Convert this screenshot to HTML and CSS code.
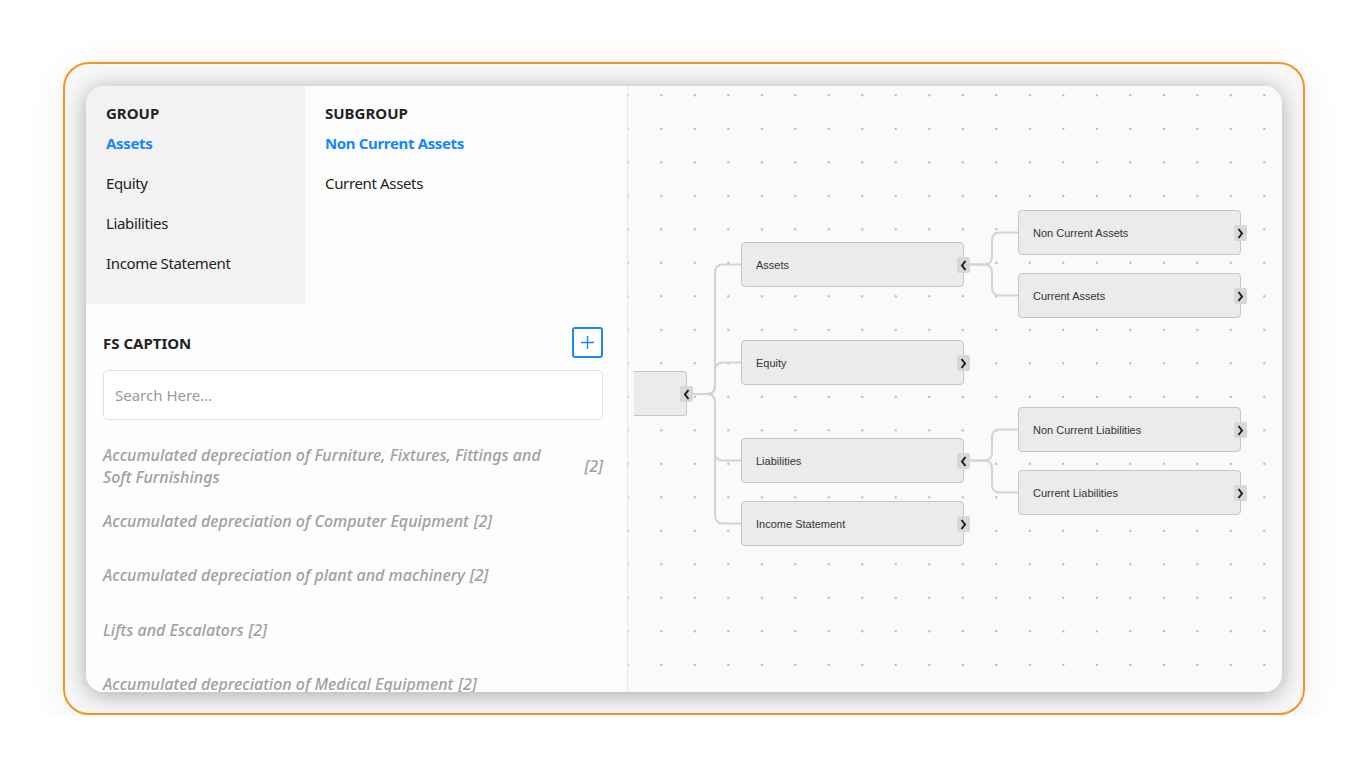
FILE: index.html
```html
<!DOCTYPE html>
<html lang="en">
<head>
  <meta charset="UTF-8">
  <meta name="viewport" content="width=device-width, initial-scale=1.0">
  <title>FS Mapping</title>
  <link rel="stylesheet" href="styles.css">
</head>
<body>

  <div class="frame">
    <div class="card">

      <div class="side">
        <div class="groups">
          <div class="col group-col">
            <h3>GROUP</h3>
            <ul class="pick-list">
              <li class="active">Assets</li>
              <li>Equity</li>
              <li>Liabilities</li>
              <li>Income Statement</li>
            </ul>
          </div>
          <div class="col sub-col">
            <h3>SUBGROUP</h3>
            <ul class="pick-list">
              <li class="active">Non Current Assets</li>
              <li>Current Assets</li>
            </ul>
          </div>
        </div>

        <div class="captions">
          <div class="caption-head">
            <h3>FS CAPTION</h3>
            <button class="add-btn" type="button">
              <svg width="15" height="15" viewBox="0 0 15 15"><path d="M7.5 1v13M1 7.5h13" stroke="#1a88f5" stroke-width="1.4" fill="none"/></svg>
            </button>
          </div>
          <input class="search" type="text" placeholder="Search Here...">
          <ul class="caption-list">
            <li><span>Accumulated depreciation of Furniture, Fixtures, Fittings and Soft&nbsp;Furnishings</span><span>[2]</span></li>
            <li><span>Accumulated depreciation of Computer Equipment</span><span>[2]</span></li>
            <li><span>Accumulated depreciation of plant and machinery</span><span>[2]</span></li>
            <li><span>Lifts and Escalators</span><span>[2]</span></li>
            <li><span>Accumulated depreciation of Medical Equipment</span><span>[2]</span></li>
          </ul>
        </div>
      </div>

      <div class="canvas">
        <svg class="links" width="654" height="606">
          <g stroke="#d3d3d3" stroke-width="2" fill="none">
            <path d="M65 308 H79 Q87 308 87 300 V186.5 Q87 178.5 95 178.5 H113"/>
            <path d="M65 308 H79 Q87 308 87 300 V284.5 Q87 276.5 95 276.5 H113"/>
            <path d="M65 308 H79 Q87 308 87 316 V366.5 Q87 374.5 95 374.5 H113"/>
            <path d="M65 308 H79 Q87 308 87 316 V429.5 Q87 437.5 95 437.5 H113"/>
            <path d="M342 178.5 H356 Q364 178.5 364 170.5 V154.5 Q364 146.5 372 146.5 H390"/>
            <path d="M342 178.5 H356 Q364 178.5 364 186.5 V201.5 Q364 209.5 372 209.5 H390"/>
            <path d="M342 374.5 H356 Q364 374.5 364 366.5 V351.5 Q364 343.5 372 343.5 H390"/>
            <path d="M342 374.5 H356 Q364 374.5 364 382.5 V398.5 Q364 406.5 372 406.5 H390"/>
          </g>
        </svg>

        <div class="node root" style="left: 6px; top: 285px;">
          <span class="tab"><svg width="7" height="11" viewBox="0 0 7 11"><path d="M5.5 1L2 5.5L5.5 10" stroke="#1e1e1e" stroke-width="2" fill="none"/></svg></span>
        </div>

        <div class="node" style="left: 113px; top: 156px;">Assets
          <span class="tab"><svg width="7" height="11" viewBox="0 0 7 11"><path d="M5.5 1L2 5.5L5.5 10" stroke="#1e1e1e" stroke-width="2" fill="none"/></svg></span>
        </div>
        <div class="node" style="left: 113px; top: 254px;">Equity
          <span class="tab"><svg width="7" height="11" viewBox="0 0 7 11"><path d="M1.5 1L5 5.5L1.5 10" stroke="#1e1e1e" stroke-width="2" fill="none"/></svg></span>
        </div>
        <div class="node" style="left: 113px; top: 352px;">Liabilities
          <span class="tab"><svg width="7" height="11" viewBox="0 0 7 11"><path d="M5.5 1L2 5.5L5.5 10" stroke="#1e1e1e" stroke-width="2" fill="none"/></svg></span>
        </div>
        <div class="node" style="left: 113px; top: 415px;">Income Statement
          <span class="tab"><svg width="7" height="11" viewBox="0 0 7 11"><path d="M1.5 1L5 5.5L1.5 10" stroke="#1e1e1e" stroke-width="2" fill="none"/></svg></span>
        </div>

        <div class="node" style="left: 390px; top: 124px;">Non Current Assets
          <span class="tab"><svg width="7" height="11" viewBox="0 0 7 11"><path d="M1.5 1L5 5.5L1.5 10" stroke="#1e1e1e" stroke-width="2" fill="none"/></svg></span>
        </div>
        <div class="node" style="left: 390px; top: 187px;">Current Assets
          <span class="tab"><svg width="7" height="11" viewBox="0 0 7 11"><path d="M1.5 1L5 5.5L1.5 10" stroke="#1e1e1e" stroke-width="2" fill="none"/></svg></span>
        </div>
        <div class="node" style="left: 390px; top: 321px;">Non Current Liabilities
          <span class="tab"><svg width="7" height="11" viewBox="0 0 7 11"><path d="M1.5 1L5 5.5L1.5 10" stroke="#1e1e1e" stroke-width="2" fill="none"/></svg></span>
        </div>
        <div class="node" style="left: 390px; top: 384px;">Current Liabilities
          <span class="tab"><svg width="7" height="11" viewBox="0 0 7 11"><path d="M1.5 1L5 5.5L1.5 10" stroke="#1e1e1e" stroke-width="2" fill="none"/></svg></span>
        </div>
      </div>

    </div>
  </div>

</body>
</html>
```

FILE: styles.css
```css
body {
    margin: 0;
    background-color: #ffffff;
    font-family: "Noto Sans", "Open Sans", sans-serif;
    color: #222;
}

.frame {
    width: 1196px;
    height: 606px;
    margin: 62px 0 0 63px;
    padding: 22px 21px 21px 21px;
    border: 2px solid #f39425;
    border-radius: 26px;
    background-color: #f7f7f7;
    box-shadow: 0 8px 40px rgba(0, 0, 0, 0.07);
}

.card {
    display: flex;
    height: 606px;
    border-radius: 18px;
    overflow: hidden;
    background-color: #fdfdfd;
    box-shadow: 0 3px 22px rgba(0, 0, 0, 0.32);
}

/* left side */
.side {
    width: 541px;
    flex-shrink: 0;
    border-right: 1px solid #e6e6e6;
    display: flex;
    flex-direction: column;
    overflow: hidden;
}

.groups {
    display: flex;
    height: 218px;
    flex-shrink: 0;
}

.col {
    padding: 17px 20px 0 20px;
}

.group-col {
    width: 179px;
    background-color: #f2f2f2;
}

.sub-col {
    flex: 1;
    background-color: #fcfcfc;
}

h3 {
    margin: 0;
    font-size: 15px;
    line-height: 20px;
    font-weight: 700;
    color: #222;
}

.pick-list {
    list-style-type: none;
    margin: 0;
    padding: 0;
}

.pick-list li {
    font-size: 15px;
    line-height: 40px;
    letter-spacing: -0.35px;
    color: #222;
}

.pick-list li.active {
    color: #1787f7;
    font-weight: 700;
}

.captions {
    padding: 23px 24px 0 17px;
    background-color: #fdfdfd;
}

.caption-head {
    display: flex;
    justify-content: space-between;
    align-items: center;
    height: 31px;
}

.add-btn {
    width: 31px;
    height: 31px;
    padding: 0;
    display: flex;
    align-items: center;
    justify-content: center;
    background-color: #ffffff;
    border: 2px solid #1a88f5;
    border-radius: 3px;
}

.search {
    display: block;
    box-sizing: border-box;
    width: 100%;
    height: 50px;
    margin-top: 12px;
    padding: 0 11px;
    border: 1px solid #e2e2e2;
    border-radius: 5px;
    background-color: #ffffff;
    font-family: "Noto Sans", sans-serif;
    font-size: 15px;
    color: #333;
}

.search::placeholder {
    color: #9a9a9a;
}

.caption-list {
    list-style-type: none;
    margin: 19px 0 0 0;
    padding: 0;
}

.caption-list li {
    display: flex;
    align-items: center;
    gap: 5px;
    height: 54.5px;
    font-size: 16px;
    line-height: 22px;
    font-style: italic;
    font-weight: 500;
    color: #a0a0a0;
}

.caption-list li span:last-child {
    flex-shrink: 0;
}

/* diagram */
.canvas {
    position: relative;
    flex: 1;
    overflow: hidden;
    background-color: #fafafa;
    background-image: radial-gradient(circle, #b4b4b4 0.9px, transparent 1.3px);
    background-size: 33.5px 33.5px;
    background-position: 16.55px -7.45px;
}

.links {
    position: absolute;
    left: 0;
    top: 0;
}

.node {
    position: absolute;
    box-sizing: border-box;
    width: 223px;
    height: 45px;
    padding-left: 14px;
    display: flex;
    align-items: center;
    background-color: #ebebeb;
    border: 1px solid #c6c6c6;
    border-radius: 4px;
    font-family: "Liberation Sans", Arial, sans-serif;
    font-size: 11px;
    color: #333;
}

.node.root {
    width: 53px;
    border-left: none;
    border-radius: 0 4px 4px 0;
}

.tab {
    position: absolute;
    right: -7px;
    top: 14px;
    width: 13px;
    height: 16px;
    display: flex;
    align-items: center;
    justify-content: center;
    background-color: #d8d8d8;
    border-radius: 2px;
}
```
